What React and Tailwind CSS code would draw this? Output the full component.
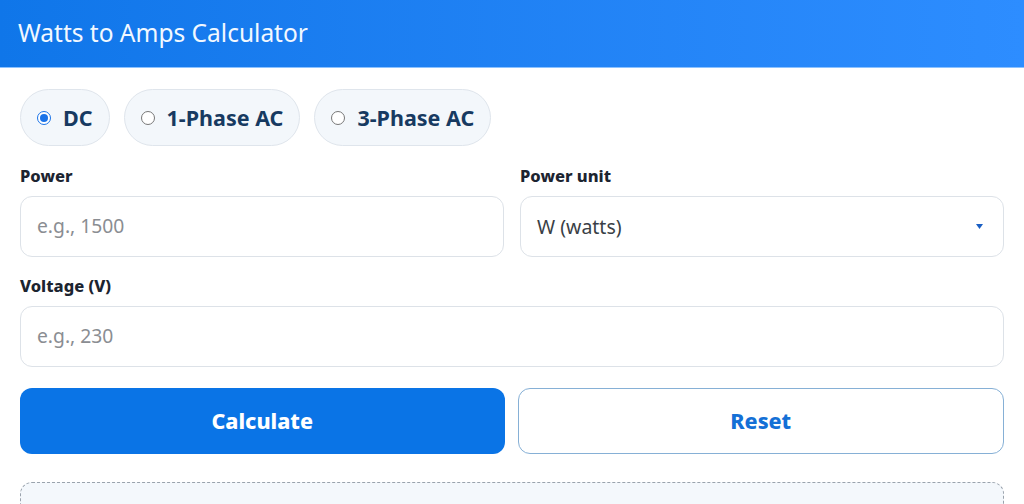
import React from "react";

function Radio({ label, checked }) {
  return (
    <label className="flex items-center gap-[12px] h-[57px] px-[16px] rounded-full border border-[#dfe5ec] bg-[#f3f7fb]">
      {checked ? (
        <span className="w-[14px] h-[14px] rounded-full border-[1.5px] border-[#1a73e8] flex items-center justify-center bg-white">
          <span className="w-[8px] h-[8px] rounded-full bg-[#1a73e8]" />
        </span>
      ) : (
        <span className="w-[14px] h-[14px] rounded-full border-[1.5px] border-[#777] bg-white" />
      )}
      <span className="text-[21.5px] font-bold text-[#173a61] leading-none">{label}</span>
    </label>
  );
}

export default function App() {
  return (
    <div className="w-[1024px] h-[504px] overflow-hidden bg-white" style={{ fontFamily: '"Noto Sans", "Open Sans", sans-serif' }}>
      <div className="h-[68px] bg-gradient-to-r from-[#0f76e9] to-[#2d8dff] border-b border-[#8cc2ff] flex items-center px-[18px]">
        <h1 className="text-[#f2f8ff] text-[24.5px] font-normal leading-none">Watts to Amps Calculator</h1>
      </div>
      <div className="px-[20px] pt-[21px]">
        <div className="flex gap-[14px]">
          <Radio label="DC" checked />
          <Radio label="1-Phase AC" />
          <Radio label="3-Phase AC" />
        </div>
        <div className="grid grid-cols-2 gap-[16px] mt-[20px]">
          <div>
            <div className="text-[16.5px] font-extrabold text-[#1c2430] leading-[20px]">Power</div>
            <div className="mt-[10px] h-[61px] rounded-[12px] border border-[#dde2e8] flex items-center px-[16px]">
              <span className="text-[19.3px] text-[#8a8d92]">e.g., 1500</span>
            </div>
          </div>
          <div>
            <div className="text-[16.5px] font-extrabold text-[#1c2430] leading-[20px]">Power unit</div>
            <div className="mt-[10px] h-[61px] rounded-[12px] border border-[#dde2e8] flex items-center justify-between pl-[16px] pr-[20px]">
              <span className="text-[19.5px] text-[#3a3f46]">W (watts)</span>
              <svg width="7" height="5" viewBox="0 0 7 5"><path d="M0 0H7L3.5 5Z" fill="#1a5fc4" /></svg>
            </div>
          </div>
        </div>
        <div className="mt-[19px]">
          <div className="text-[16.5px] font-extrabold text-[#1c2430] leading-[20px]">Voltage (V)</div>
          <div className="mt-[10px] h-[61px] rounded-[12px] border border-[#dde2e8] flex items-center px-[16px]">
            <span className="text-[19.3px] text-[#8a8d92]">e.g., 230</span>
          </div>
        </div>
        <div className="flex gap-[13px] mt-[21px]">
          <button className="flex-1 h-[66px] rounded-[12px] bg-[#0a74e6] text-white text-[21.5px] font-extrabold">Calculate</button>
          <button className="flex-1 h-[66px] rounded-[12px] border-[1.5px] border-[#86b0d6] bg-white text-[#1470d6] text-[21.5px] font-extrabold">Reset</button>
        </div>
        <div className="mt-[28px] h-[60px] rounded-[12px] border border-dashed border-[#9aa3ad] bg-[#f4f8fc]" />
      </div>
    </div>
  );
}
